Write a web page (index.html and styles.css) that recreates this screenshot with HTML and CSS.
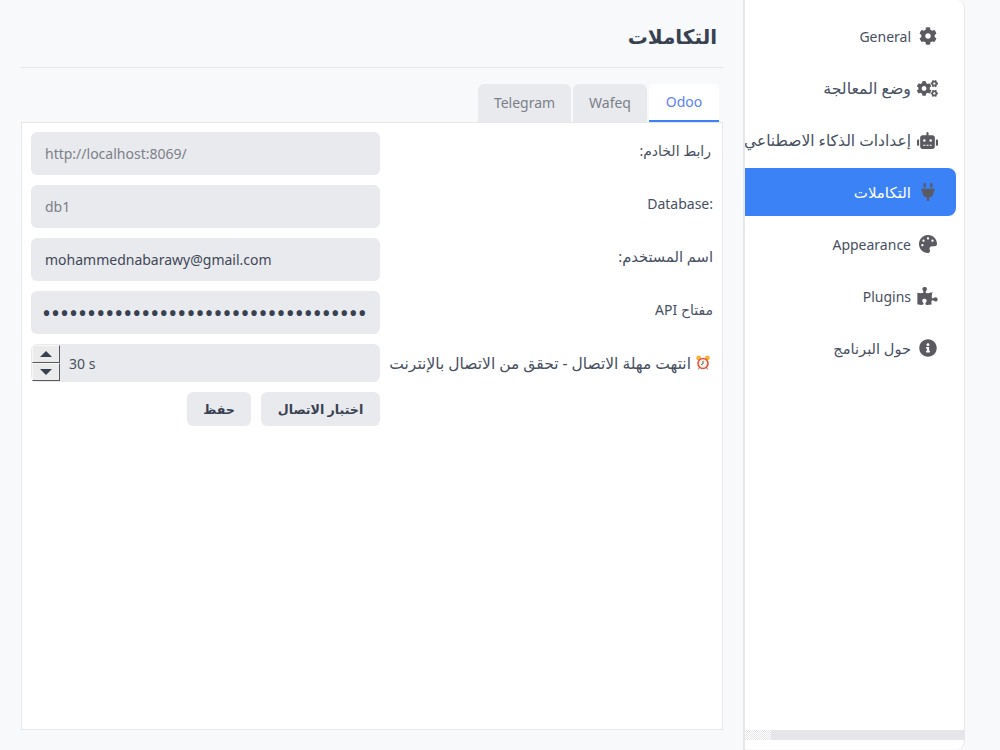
FILE: index.html
```html
<!DOCTYPE html>
<html lang="ar">
<head>
<meta charset="utf-8">
<title>التكاملات</title>
<link rel="stylesheet" href="styles.css">
</head>
<body>
<div class="app">
  <main class="main">
    <h1 class="title">التكاملات</h1>
    <div class="tabs">
      <div class="tab active">Odoo</div>
      <div class="tab tab-wafeq">Wafeq</div>
      <div class="tab tab-telegram">Telegram</div>
    </div>
    <section class="panel">
      <div class="form">
        <label class="label label-url">رابط الخادم:</label>
        <div class="field muted">http://localhost:8069/</div>
        <label class="label label-db">Database:</label>
        <div class="field muted">db1</div>
        <label class="label label-user">اسم المستخدم:</label>
        <div class="field">mohammednabarawy@gmail.com</div>
        <label class="label">مفتاح API</label>
        <div class="field field-pass">••••••••••••••••••••••••••••••••••••</div>
        <label class="label-timeout"><svg class="clock" viewBox="0 0 16 16" aria-hidden="true"><circle cx="3.6" cy="3" r="2.4" fill="#f5b335"/><circle cx="12.4" cy="3" r="2.4" fill="#f5b335"/><path d="M3 14.5l1.6-2M13 14.5l-1.6-2" stroke="#b9b2a4" stroke-width="1.4"/><circle cx="8" cy="8.5" r="5.8" fill="#e8503f"/><circle cx="8" cy="8.5" r="4.2" fill="#fdf3e6"/><path d="M8 5.8v2.9l-1.8 1" fill="none" stroke="#555" stroke-width="1"/></svg> انتهت مهلة الاتصال - تحقق من الاتصال بالإنترنت</label>
        <div class="spin">
          <div class="spin-buttons">
            <div class="spin-btn"><span class="arrow-up"></span></div>
            <div class="spin-btn"><span class="arrow-down"></span></div>
          </div>
          <span class="spin-value">30 s</span>
        </div>
        <div class="actions">
          <button class="btn btn-test">اختبار الاتصال</button>
          <button class="btn btn-save">حفظ</button>
        </div>
      </div>
    </section>
  </main>
  <div class="rail"></div>
  <aside class="sidebar">
    <nav class="nav">
      <a class="item"><span class="ico"><svg viewBox="0 0 512 512" class="i18"><path d="M487.4 315.7l-42.6-24.6c4.3-23.2 4.3-47 0-70.2l42.6-24.6c4.9-2.8 7.1-8.6 5.5-14-11.1-35.6-30-67.8-54.7-94.6-3.8-4.1-10-5.1-14.8-2.3L380.8 110c-17.9-15.4-38.5-27.3-60.8-35.1V25.8c0-5.6-3.9-10.5-9.4-11.7-36.7-8.2-74.3-7.8-109.2 0-5.5 1.2-9.4 6.1-9.4 11.7V75c-22.2 7.9-42.8 19.8-60.8 35.1L88.7 85.5c-4.9-2.8-11-1.9-14.8 2.3-24.7 26.7-43.6 58.9-54.7 94.6-1.7 5.4.6 11.2 5.5 14L67.3 221c-4.3 23.2-4.3 47 0 70.2l-42.6 24.6c-4.9 2.8-7.1 8.6-5.5 14 11.1 35.6 30 67.8 54.7 94.6 3.8 4.1 10 5.1 14.8 2.3l42.6-24.6c17.9 15.4 38.5 27.3 60.8 35.1v49.2c0 5.6 3.9 10.5 9.4 11.7 36.7 8.2 74.3 7.8 109.2 0 5.5-1.2 9.4-6.1 9.4-11.7v-49.2c22.2-7.9 42.8-19.8 60.8-35.1l42.6 24.6c4.9 2.8 11 1.9 14.8-2.3 24.7-26.7 43.6-58.9 54.7-94.6 1.5-5.5-.7-11.3-5.6-14.1zM256 336c-44.1 0-80-35.9-80-80s35.9-80 80-80 80 35.9 80 80-35.9 80-80 80z"/></svg></span><span>General</span></a>
      <a class="item"><span class="ico"><svg viewBox="0 0 640 512" class="i21"><path d="M512.1 191l-8.2 14.3c-3 5.3-9.4 7.5-15.1 5.4-11.8-4.4-22.6-10.7-32.1-18.6-4.6-3.8-5.8-10.5-2.8-15.7l8.2-14.3c-6.9-8-12.3-17.3-15.9-27.4h-16.5c-6 0-11.2-4.3-12.2-10.3-2-12-2.1-24.6 0-37.1 1-6 6.2-10.4 12.2-10.4h16.5c3.6-10.1 9-19.4 15.9-27.4l-8.2-14.3c-3-5.2-1.9-11.9 2.8-15.7 9.5-7.9 20.4-14.2 32.1-18.6 5.7-2.1 12.1.1 15.1 5.4l8.2 14.3c10.5-1.9 21.2-1.9 31.7 0L552 6.3c3-5.3 9.4-7.5 15.1-5.4 11.8 4.4 22.6 10.7 32.1 18.6 4.6 3.8 5.8 10.5 2.8 15.7l-8.2 14.3c6.9 8 12.3 17.3 15.9 27.4h16.5c6 0 11.2 4.3 12.2 10.3 2 12 2.1 24.6 0 37.1-1 6-6.2 10.4-12.2 10.4h-16.5c-3.6 10.1-9 19.4-15.9 27.4l8.2 14.3c3 5.2 1.9 11.9-2.8 15.7-9.5 7.9-20.4 14.2-32.1 18.6-5.7 2.1-12.1-.1-15.1-5.4l-8.2-14.3c-10.4 1.9-21.2 1.9-31.7 0zm-10.5-58.8c38.5 29.6 82.4-14.3 52.8-52.8-38.5-29.7-82.4 14.3-52.8 52.8zM386.3 286.1l33.7 16.8c10.1 5.8 14.5 18.1 10.5 29.1-8.9 24.2-26.4 46.4-42.6 65.8-7.4 8.9-20.2 11.1-30.3 5.3l-29.1-16.8c-16 13.7-34.6 24.6-54.9 31.7v33.6c0 11.6-8.3 21.6-19.7 23.6-24.6 4.2-50.4 4.4-75.9 0-11.5-2-20-11.9-20-23.6V418c-20.3-7.2-38.9-18-54.9-31.7L74 403c-10 5.8-22.9 3.6-30.3-5.3-16.2-19.4-33.3-41.6-42.2-65.7-4-10.9.4-23.2 10.5-29.1l33.3-16.8c-3.9-20.9-3.9-42.4 0-63.4L12 205.8c-10.1-5.8-14.6-18.1-10.5-29 8.9-24.2 26-46.4 42.2-65.8 7.4-8.9 20.2-11.1 30.3-5.3l29.1 16.8c16-13.7 34.6-24.6 54.9-31.7V57.1c0-11.5 8.2-21.5 19.6-23.5 24.6-4.2 50.5-4.4 76-.1 11.5 2 20 11.9 20 23.6v33.6c20.3 7.2 38.9 18 54.9 31.7l29.1-16.8c10-5.8 22.9-3.6 30.3 5.3 16.2 19.4 33.2 41.6 42.1 65.8 4 10.9.1 23.2-10 29.1l-33.7 16.8c3.9 21 3.9 42.5 0 63.5zm-117.6 21.1c59.2-77-28.7-164.9-105.7-105.7-59.2 77 28.7 164.9 105.7 105.7zm243.4 182.7l-8.2 14.3c-3 5.3-9.4 7.5-15.1 5.4-11.8-4.4-22.6-10.7-32.1-18.6-4.6-3.8-5.8-10.5-2.8-15.7l8.2-14.3c-6.9-8-12.3-17.3-15.9-27.4h-16.5c-6 0-11.2-4.3-12.2-10.3-2-12-2.1-24.6 0-37.1 1-6 6.2-10.4 12.2-10.4h16.5c3.6-10.1 9-19.4 15.9-27.4l-8.2-14.3c-3-5.2-1.9-11.9 2.8-15.7 9.5-7.9 20.4-14.2 32.1-18.6 5.7-2.1 12.1.1 15.1 5.4l8.2 14.3c10.5-1.9 21.2-1.9 31.7 0l8.2-14.3c3-5.3 9.4-7.5 15.1-5.4 11.8 4.4 22.6 10.7 32.1 18.6 4.6 3.8 5.8 10.5 2.8 15.7l-8.2 14.3c6.9 8 12.3 17.3 15.9 27.4h16.5c6 0 11.2 4.3 12.2 10.3 2 12 2.1 24.6 0 37.1-1 6-6.2 10.4-12.2 10.4h-16.5c-3.6 10.1-9 19.4-15.9 27.4l8.2 14.3c3 5.2 1.9 11.9-2.8 15.7-9.5 7.9-20.4 14.2-32.1 18.6-5.7 2.1-12.1-.1-15.1-5.4l-8.2-14.3c-10.4 1.9-21.2 1.9-31.7 0zM501.6 431c38.5 29.6 82.4-14.3 52.8-52.8-38.5-29.6-82.4 14.3-52.8 52.8z"/></svg></span><span class="ar-mode">وضع المعالجة</span></a>
      <a class="item"><span class="ico"><svg viewBox="0 0 640 512" class="i21"><path d="M32,224H64V416H32A31.96166,31.96166,0,0,1,0,384V256A31.96166,31.96166,0,0,1,32,224Zm512-48V448a64.06328,64.06328,0,0,1-64,64H160a64.06328,64.06328,0,0,1-64-64V176a79.974,79.974,0,0,1,80-80H288V32a32,32,0,0,1,64,0V96H464A79.974,79.974,0,0,1,544,176ZM264,256a40,40,0,1,0-40,40A39.997,39.997,0,0,0,264,256Zm-8,128H192v32h64Zm96,0H288v32h64ZM456,256a40,40,0,1,0-40,40A39.997,39.997,0,0,0,456,256Zm-8,128H384v32h64ZM640,256V384a31.96166,31.96166,0,0,1-32,32H576V224h32A31.96166,31.96166,0,0,1,640,256Z"/></svg></span><span class="ar-ai">إعدادات الذكاء الاصطناعي</span></a>
      <a class="item current"><span class="ico"><svg viewBox="0 0 384 512" class="i14"><path d="M320,32a32,32,0,0,0-64,0v96h64Zm48,128H16A16,16,0,0,0,0,176v32a16,16,0,0,0,16,16H32v32A160.07,160.07,0,0,0,160,412.8V512h64V412.8A160.07,160.07,0,0,0,352,256V224h16a16,16,0,0,0,16-16V176A16,16,0,0,0,368,160ZM128,32a32,32,0,0,0-64,0v96h64Z"/></svg></span><span class="ar-nav">التكاملات</span></a>
      <a class="item"><span class="ico"><svg viewBox="0 0 512 512" class="i18"><path d="M204.3 5C104.9 24.4 24.8 104.3 5.2 203.4c-37 187 131.7 326.4 258.8 306.7 41.2-6.4 61.4-54.6 42.5-91.7-23.1-45.4 9.9-98.4 60.9-98.4h79.7c35.8 0 64.8-29.6 64.9-65.3C511.5 97.1 368.1-26.9 204.3 5zM96 320c-17.7 0-32-14.3-32-32s14.3-32 32-32 32 14.3 32 32-14.3 32-32 32zm32-128c-17.7 0-32-14.3-32-32s14.3-32 32-32 32 14.3 32 32-14.3 32-32 32zm128-64c-17.7 0-32-14.3-32-32s14.3-32 32-32 32 14.3 32 32-14.3 32-32 32zm128 64c-17.7 0-32-14.3-32-32s14.3-32 32-32 32 14.3 32 32-14.3 32-32 32z"/></svg></span><span>Appearance</span></a>
      <a class="item"><span class="ico"><svg viewBox="0 0 576 512" class="i20"><path d="M519.442 288.651c-41.519 0-59.5 31.593-82.058 31.593C377.409 320.244 432 144 432 144s-196.288 80-196.288-3.297c0-35.827 36.288-46.25 36.288-85.985C272 19.216 243.885 0 210.539 0c-34.654 0-66.366 18.891-66.366 56.346 0 41.364 31.711 59.277 31.711 81.75C175.885 207.719 0 166.758 0 166.758v333.237s178.635 41.047 178.635-28.662c0-22.473-40-40.107-40-81.471 0-37.456 29.25-56.346 63.577-56.346 33.673 0 61.788 19.216 61.788 54.717 0 39.735-36.288 50.158-36.288 85.985 0 60.803 129.675 25.73 181.23 25.73 0 0-34.725-120.101 25.827-120.101 35.962 0 46.423 36.152 86.308 36.152C556.712 416 576 387.99 576 354.443c0-34.199-18.962-65.792-56.558-65.792z"/></svg></span><span>Plugins</span></a>
      <a class="item"><span class="ico"><svg viewBox="0 0 512 512" class="i18"><path d="M256 8C119 8 8 119 8 256s111 248 248 248 248-111 248-248S393 8 256 8zm0 110c23.2 0 42 18.8 42 42s-18.8 42-42 42-42-18.8-42-42 18.8-42 42-42zm56 254c0 6.6-5.4 12-12 12h-88c-6.6 0-12-5.4-12-12v-24c0-6.6 5.4-12 12-12h12v-64h-12c-6.6 0-12-5.4-12-12v-24c0-6.6 5.4-12 12-12h64c6.6 0 12 5.4 12 12v100h12c6.6 0 12 5.4 12 12v24z"/></svg></span><span class="ar-about">حول البرنامج</span></a>
    </nav>
    <div class="hscroll"><div class="hscroll-track"></div><div class="hscroll-thumb"></div></div>
  </aside>
</div>
</body>
</html>
```
FILE: styles.css
```css
* { box-sizing: border-box; }
html, body { margin: 0; height: 100%; }
body {
  background: #f8f9fb;
  color: #465060;
  font-family: "Noto Sans", "DejaVu Sans", sans-serif;
  font-size: 14px;
  overflow: hidden;
}
.app { display: flex; height: 750px; }
.main {
  width: 743px;
  padding: 0 20px 20px 21px;
  display: flex;
  flex-direction: column;
  direction: rtl;
}
.title {
  margin: 0;
  height: 68px;
  padding: 20px 6px 0 0;
  font-size: 20px;
  line-height: 34px;
  font-weight: 700;
  color: #374151;
  border-bottom: 1px solid #e5e7eb;
}
.tabs {
  display: flex;
  gap: 2px;
  margin-top: 16px;
  padding-right: 4px;
  height: 38px;
}
.tab {
  display: flex;
  align-items: center;
  justify-content: center;
  background: #e9eaee;
  color: #7b8088;
  border-radius: 6px 6px 0 0;
  font-size: 14px;
  padding-bottom: 2px;
}
.tab.active {
  width: 70px;
  background: #fff;
  color: #5b82f6;
  border-bottom: 2px solid #3b82f6;
}
.tab-wafeq { width: 74px; }
.tab-telegram { width: 93px; }
.panel {
  flex: 1;
  background: #fff;
  border: 1px solid #e5e7eb;
  padding: 9px;
}
.form {
  display: grid;
  grid-template-columns: 323px 349px;
  gap: 10px;
}
.label {
  display: flex;
  align-items: center;
  padding-bottom: 7px;
  white-space: nowrap;
  font-size: 14px;
}
.label-url { padding-right: 2px; }
.label-db { direction: ltr; justify-content: flex-end; }
.label-user { font-size: 14.7px; }
.label-timeout {
  display: flex;
  align-items: center;
  gap: 4px;
  padding-right: 2px;
  white-space: nowrap;
  font-size: 15.5px;
}
.field {
  height: 43px;
  padding: 0 14px;
  display: flex;
  align-items: center;
  direction: ltr;
  background: #e9eaee;
  border-radius: 6px;
  font-size: 14px;
  color: #3f4856;
}
.muted { color: #7b8088; }
.field-pass {
  padding: 0 11px;
  font-size: 24px;
  color: #374151;
  overflow: hidden;
  white-space: nowrap;
}
.clock { width: 16px; height: 16px; flex: none; }
.spin {
  height: 38px;
  display: flex;
  align-items: center;
  direction: ltr;
  background: #e9eaee;
  border-radius: 6px;
  font-size: 14px;
}
.spin-buttons {
  width: 28px;
  height: 36px;
  margin: 0 0 1px 1px;
  display: flex;
  flex-direction: column;
  flex: none;
}
.spin-btn {
  flex: 1;
  display: flex;
  align-items: center;
  justify-content: center;
  background: #ebebeb;
  border-top: 1px solid #f8f8f8;
  border-left: 1px solid #f8f8f8;
  border-right: 1px solid #55575c;
  border-bottom: 1px solid #55575c;
}
.arrow-up {
  border-left: 6px solid transparent;
  border-right: 6px solid transparent;
  border-bottom: 6px solid #374151;
}
.arrow-down {
  border-left: 6px solid transparent;
  border-right: 6px solid transparent;
  border-top: 6px solid #374151;
}
.spin-value { margin-left: 9px; }
.actions { grid-column: 2; display: flex; gap: 10px; }
.btn {
  height: 34px;
  border: 0;
  border-radius: 6px;
  background: #e9eaee;
  color: #374151;
  font-family: inherit;
  font-size: 12.6px;
  font-weight: 700;
  padding: 0;
}
.btn-test { width: 119px; }
.btn-save { width: 64px; }
.rail { width: 2px; background: #e5e7eb; flex: none; }
.sidebar {
  width: 220px;
  height: 749px;
  flex: none;
  background: #fff;
  border-right: 1px solid #e5e7eb;
  border-radius: 0 8px 8px 0;
  display: flex;
  flex-direction: column;
  overflow: hidden;
  padding-bottom: 9px;
  direction: rtl;
}
.nav {
  flex: 1;
  padding-top: 12px;
  display: flex;
  flex-direction: column;
  gap: 4px;
  overflow: hidden;
}
.item {
  height: 48px;
  flex: none;
  margin-right: 8px;
  padding-right: 18px;
  display: flex;
  align-items: center;
  gap: 6px;
  white-space: nowrap;
  font-size: 14px;
  border-radius: 0 8px 8px 0;
}
.item.current { background: #3b82f6; color: #fff; }
.ar-mode { font-size: 15.8px; }
.ar-ai { font-size: 15.5px; }
.ar-nav { font-size: 15px; }
.ar-about { font-size: 14.6px; }
.ico { width: 21px; flex: none; display: flex; align-items: center; justify-content: center; }
.ico svg { fill: #5a5a60; display: block; }
.i18 { width: 18px; height: 18px; }
.i21 { width: 21px; height: 17px; }
.i14 { width: 14px; height: 18px; }
.i20 { width: 21px; height: 18px; }
.hscroll { height: 10px; flex: none; display: flex; direction: ltr; }
.hscroll-track {
  width: 26px;
  background-color: #fff;
  background-image: conic-gradient(#e5e5ea 25%, #fff 0 50%, #e5e5ea 0 75%, #fff 0);
  background-size: 2px 2px;
}
.hscroll-thumb { flex: 1; background: #e5e5ea; }
```
